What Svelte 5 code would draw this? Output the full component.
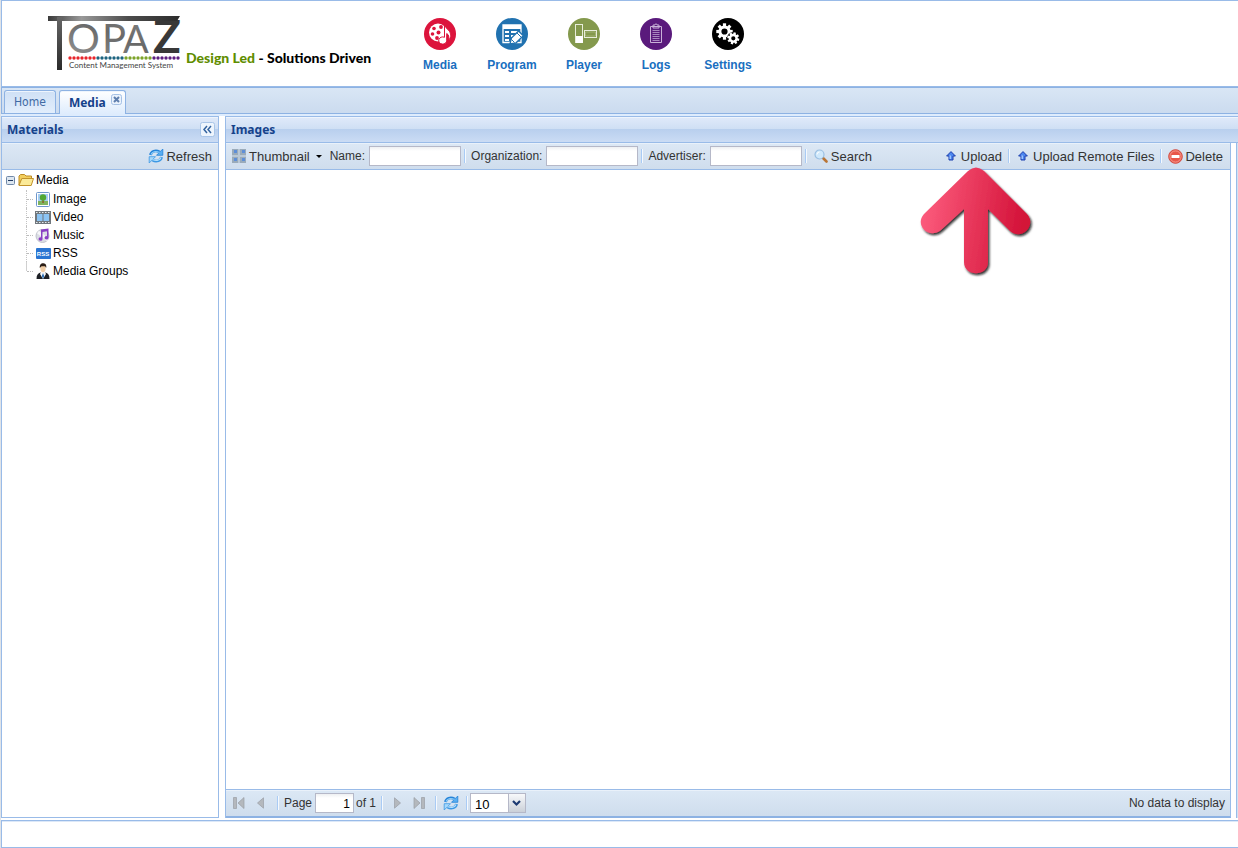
<script>
  let page = $state('1');
  let pageSize = $state('10');
  const nav = ['Media', 'Program', 'Player', 'Logs', 'Settings'];
  const materials = ['Image', 'Video', 'Music', 'RSS', 'Media Groups'];
  const dots = Array.from({ length: 28 }, (_, i) => i);
  const dotColor = (i) => (i < 7 ? '#e8252b' : i < 14 ? '#1d6480' : i < 21 ? '#7da32a' : '#5c1f80');
  const teeth = [0, 45, 90, 135, 180, 225, 270, 315];
</script>

{#snippet refreshIcon()}
  <svg width="16" height="16" viewBox="0 0 16 16" aria-hidden="true">
    <path d="M2.500 7C3 3.500 7.500 1.500 11.500 4" fill="none" stroke="#2583d8" stroke-width="2.800" />
    <path d="M14.800 1v6.300H8.500z" fill="#58aef2" stroke="#2583d8" stroke-width=".8" />
    <path d="M3 6.500C4 3.800 7.500 2.500 11.500 4.500" fill="none" stroke="#8fd0fa" stroke-width="1.200" />
    <path d="M13.500 9C13 12.500 8.500 14.500 4.500 12" fill="none" stroke="#3d98e4" stroke-width="2.800" />
    <path d="M1.200 15V8.700h6.300z" fill="#a5d8fb" stroke="#3d98e4" stroke-width=".8" />
    <path d="M13 9.500c-1 2.700-4.500 4-8.500 2" fill="none" stroke="#b5e0fc" stroke-width="1.200" />
  </svg>
{/snippet}

{#snippet uploadIcon()}
  <svg width="10" height="10" viewBox="0 0 10 10" aria-hidden="true">
    <path d="M5 .6 9.400 5H7v4H3V5H.6z" fill="#4c86ee" stroke="#1c3fae" stroke-width="1" stroke-linejoin="round" />
    <path d="M3.500 4.500H5V8H3.500z" fill="#9cc4ff" />
  </svg>
{/snippet}

{#snippet navIcon(name)}
  <svg width="32" height="32" viewBox="0 0 32 32" aria-hidden="true">
    {#if name === 'Media'}
      <circle cx="16" cy="16" r="16" fill="#dc143c" />
      <circle cx="14" cy="14.500" r="9" fill="#fff" />
      <g fill="#dc143c">
        <circle cx="14.500" cy="14.500" r="2" />
        <circle cx="10" cy="10.500" r="1.800" /><circle cx="17" cy="9" r="1.900" />
        <circle cx="8.500" cy="16" r="1.800" /><circle cx="13" cy="20" r="1.900" />
      </g>
      <path d="M20.500 7.500c1 3 6 4.500 6.300 9.500.1 2.500-1 4-2.300 5 .8-3 .2-5.500-1.800-6.500v6.800a4 3.600 0 1 1-2.200-3z" fill="#fff" stroke="#dc143c" stroke-width="1" />
    {:else if name === 'Program'}
      <circle cx="16" cy="16" r="16" fill="#2172b0" />
      <path d="M7 7h18v17.500H7z" fill="#2172b0" stroke="#fff" stroke-width="1.300" />
      <path d="M7 7h18v4H7z" fill="#fff" />
      <g fill="#fff"><path d="M9 13h4v2H9zM15 13h7v2h-7zM9 17h4v2H9zM15 17h5v2h-5zM9 21h4v2H9z" /></g>
      <path d="m14 26 1.400-6 7.200-7 4.700 4.800-7.200 7z" fill="#fff" stroke="#2172b0" stroke-width="1.300" />
      <path d="m15.500 21.500 3 3M21 15l4.200 4.200" stroke="#2172b0" fill="none" />
    {:else if name === 'Player'}
      <circle cx="16" cy="16" r="16" fill="#84994d" />
      <rect x="7.500" y="6.500" width="7" height="18" fill="none" stroke="#e8edda" />
      <rect x="8" y="18" width="7" height="7" fill="#fff" />
      <rect x="16.500" y="12.500" width="12" height="7" fill="none" stroke="#e8edda" />
      <path d="M17.500 14h10v4h-10z" fill="#84994d" stroke="#b5c38c" stroke-width=".6" />
    {:else if name === 'Logs'}
      <circle cx="16" cy="16" r="16" fill="#5a1a7c" />
      <path d="M10.500 8.500h11v16h-11zM13 8.500V7h2c0-1.600 2-1.600 2 0h2v3h-6z" fill="none" stroke="#c9b2d8" />
      <path d="M12.500 12.500h7M12.500 14.500h7M12.500 16.500h7M12.500 18.500h7M12.500 20.500h7M12.500 22.500h7" stroke="#a987bf" />
    {:else}
      <circle cx="16" cy="16" r="16" fill="#000" />
      <g transform="translate(12.500 13.500)" fill="#fff">
        {#each teeth as angle}
          <rect x="-1.600" y="-8.200" width="3.200" height="4" transform="rotate({angle})" />
        {/each}
        <circle r="4.600" fill="none" stroke="#fff" stroke-width="3" />
      </g>
      <g transform="translate(21.300 20.300)" fill="#fff">
        <circle r="6.300" fill="#000" />
        {#each teeth as angle}
          <rect x="-1.200" y="-6" width="2.400" height="3" transform="rotate({angle + 15})" />
        {/each}
        <circle r="3.300" fill="none" stroke="#fff" stroke-width="2.400" />
      </g>
    {/if}
  </svg>
{/snippet}

{#snippet treeIcon(name)}
  <svg width="16" height="16" viewBox="0 0 16 16" aria-hidden="true">
    {#if name === 'Image'}
      <rect x="1.500" y="1.500" width="13" height="14" rx="1" fill="#fff" stroke="#6c96cc" />
      <path d="M3 3h10v8H3z" fill="#a6cdf3" /><path d="M3 10h10v4H3z" fill="#7fb35e" />
      <path d="M7.300 8h1.500v4H7.300z" fill="#8b5a2b" /><circle cx="8" cy="6.500" r="3.200" fill="#52a832" />
    {:else if name === 'Video'}
      <path d="M0 2h16v13H0z" fill="#70777d" />
      <path d="M2 5h5.500v7H2zM8.500 5H14v7H8.500z" fill="#8cc4f3" />
      <path d="M1 3.500h15M1 13.500h15" stroke="#e6eaed" stroke-dasharray="1.500 1.500" />
    {:else if name === 'Music'}
      <circle cx="7.500" cy="9" r="6.500" fill="#dadde4" stroke="#c0c3cc" />
      <path d="M3 5l10 8" stroke="#f7f7fa" stroke-width="3" />
      <path d="M6 2.500 13.500 1.500v9.200a2 1.700 0 1 1-1.500-1.500V4.300l-4.500.6v7a2 1.700 0 1 1-1.500-1.500z" fill="#8a3fc4" />
    {:else if name === 'RSS'}
      <rect x="1" y="3" width="15" height="11" rx="1" fill="#2a75d2" />
      <text x="8" y="11" text-anchor="middle" class="rss">RSS</text>
    {:else}
      <path d="M1.500 16c0-4 1.500-6 4-6.500h5c2.500.5 4 2.500 4 6.500z" fill="#1d2025" />
      <path d="M6 9h4l1 2-3 5-3-5z" fill="#f6f8fb" /><path d="m8 10 1.200 3L8 16l-1.200-3z" fill="#2d6fb5" />
      <ellipse cx="8" cy="5.500" rx="2.600" ry="3.800" fill="#f0cda5" />
      <path d="M4.800 5C4.500 1 6.500 0 8.500.2c2.500.2 3.200 2 2.700 4.800L10 3.300H6.500z" fill="#2a1d15" />
    {/if}
  </svg>
{/snippet}

<div class="app">
  <header>
    <div class="brand">
      <svg class="logo" width="134" height="58" viewBox="0 0 134 58" role="img" aria-label="Topaz Content Management System">
        <defs>
          <linearGradient id="steel" gradientUnits="userSpaceOnUse" x1="0" y1="0" x2="134" y2="0">
            <stop offset="0" stop-color="#3a3a3a" /><stop offset=".25" stop-color="#999" />
            <stop offset=".6" stop-color="#4c4c4c" /><stop offset="1" stop-color="#2b2b2b" />
          </linearGradient>
          <linearGradient id="silver" x1="0" y1="1" x2="1" y2="0">
            <stop offset="0" stop-color="#a2a2a2" /><stop offset=".5" stop-color="#686868" /><stop offset="1" stop-color="#999" />
          </linearGradient>
          <linearGradient id="stem" x1="0" y1="0" x2="0" y2="1">
            <stop offset="0" stop-color="#666" /><stop offset="1" stop-color="#2b2b2b" />
          </linearGradient>
        </defs>
        <text class="wordmark">
          <tspan x="3" y="24" font-size="28" fill="#555">T</tspan><tspan x="19" y="39" font-size="41" fill="url(#silver)">O</tspan><tspan x="54" y="39" font-size="40" fill="url(#silver)">P</tspan><tspan x="75" y="39" font-size="38" fill="url(#silver)">A</tspan><tspan x="105" y="39" font-size="46" font-weight="700" fill="#383838">Z</tspan>
        </text>
        <path d="M0 2h132l-3 5H0z" fill="url(#steel)" />
        <rect x="9" y="3" width="5" height="53" fill="url(#stem)" />
        {#each dots as i}
          <circle cx={22 + i * 4} cy="44" r="1.700" fill={dotColor(i)} />
        {/each}
        <text x="21" y="54" class="subtitle">Content Management System</text>
      </svg>
      <p class="tagline"><span>Design Led</span> - Solutions Driven</p>
    </div>
    <nav>
      {#each nav as item}
        <a href={'#' + item.toLowerCase()}>{@render navIcon(item)}<span>{item}</span></a>
      {/each}
    </nav>
  </header>

  <div class="tabs" role="tablist">
    <button class="tab" role="tab" aria-selected="false">Home</button>
    <button class="tab active" role="tab" aria-selected="true">Media
      <svg width="11" height="11" viewBox="0 0 11 11" aria-hidden="true">
        <rect x=".5" y=".5" width="10" height="10" rx="2" fill="#eaf2fc" stroke="#a5c1e5" />
        <path d="m3 3 5 5M8 3 3 8" stroke="#5f7fae" stroke-width="2" />
      </svg>
    </button>
  </div>

  <div class="workspace">
    <aside>
      <div class="title">
        <h2>Materials</h2>
        <button class="collapse" aria-label="Collapse materials">
          <svg width="15" height="15" viewBox="0 0 15 15" aria-hidden="true">
            <rect x=".5" y=".5" width="14" height="14" rx="2" fill="#eef5fd" stroke="#a9c5e8" />
            <path d="M7 4l-3 3.500L7 11M11 4 8 7.500 11 11" fill="none" stroke="#33639f" stroke-width="1.500" />
          </svg>
        </button>
      </div>
      <div class="toolbar side"><button>{@render refreshIcon()}Refresh</button></div>
      <ul class="tree">
        <li class="root">
          <svg class="minus" width="9" height="9" viewBox="0 0 9 9" aria-hidden="true">
            <rect x=".5" y=".5" width="8" height="8" rx="1" fill="#dce6f0" stroke="#7088a8" /><path d="M2 4.500h5" stroke="#223a60" />
          </svg>
          <svg width="16" height="16" viewBox="0 0 16 16" aria-hidden="true">
            <path d="M1 13V4l1.500-1.500h4L8 4h5.500v3H4z" fill="#f2ce5d" stroke="#bd8c25" />
            <path d="M1 13.500 3.800 6.500h11.700l-2.300 7z" fill="#fbea98" stroke="#c2932c" />
          </svg>
          <span>Media</span>
        </li>
        {#each materials as item}
          <li class="leaf">{@render treeIcon(item)}<span>{item}</span></li>
        {/each}
      </ul>
    </aside>

    <main>
      <div class="title"><h2>Images</h2></div>
      <div class="content">
        <section>
          <div class="toolbar">
            <button class="thumb">
              <svg width="14" height="14" viewBox="0 0 14 14" aria-hidden="true">
                <path d="M0 0h14v14H0z" fill="#b9c8d6" />
                <path d="M0 0h6v6H0zM8 0h6v6H8zM0 8h6v6H0zM8 8h6v6H8z" fill="#9aabba" />
                <path d="M2 1h3v3H2zM10 1h3v3h-3zM2 9h3v3H2zM10 9h3v3h-3z" fill="#5e8fd8" />
              </svg>Thumbnail<i class="caret"></i>
            </button>
            <label class="first">Name:<input type="text" /></label><i class="sep"></i>
            <label>Organization:<input type="text" /></label><i class="sep"></i>
            <label>Advertiser:<input type="text" /></label><i class="sep"></i>
            <button class="search">
              <svg width="14" height="14" viewBox="0 0 14 14" aria-hidden="true">
                <path d="m8.500 8.500 4 4" stroke="#b97536" stroke-width="2.600" stroke-linecap="round" />
                <circle cx="5.500" cy="5.500" r="4.500" fill="#cfe8fb" stroke="#9abfe2" stroke-width="1.200" />
                <path d="M3 5.500A2.500 2.500 0 0 1 5.500 3" fill="none" stroke="#fff" />
              </svg>Search
            </button>
            <span class="push"></span>
            <span class="anchor">
              <button class="upload">{@render uploadIcon()}Upload</button>
              <svg class="pointer" width="118" height="114" viewBox="0 0 118 114" aria-hidden="true">
                <defs>
                  <linearGradient id="red" x1="0" y1="0" x2="1" y2=".15">
                    <stop offset="0" stop-color="#ff6182" /><stop offset="1" stop-color="#d31238" />
                  </linearGradient>
                  <filter id="shade" x="-10%" y="-10%" width="125%" height="125%">
                    <feDropShadow dx="1.500" dy="2" stdDeviation=".8" flood-color="#111" flood-opacity=".85" />
                  </filter>
                </defs>
                <path filter="url(#shade)" fill="url(#red)" d="M50 5q8-7 16 0l43 43c10 11-5 27-17 17L70 43v53c0 15-24 15-24 0V43L23 64C11 74-4 59 6 48z" />
              </svg>
            </span>
            <i class="sep"></i>
            <button class="upload">{@render uploadIcon()}Upload Remote Files</button>
            <i class="sep"></i>
            <button class="delete">
              <svg width="15" height="15" viewBox="0 0 15 15" aria-hidden="true">
                <circle cx="7.500" cy="7.500" r="6.800" fill="#e8574a" stroke="#d2483d" />
                <circle cx="7.500" cy="7.500" r="5.600" fill="none" stroke="#f7a79c" stroke-width=".8" />
                <rect x="3.500" y="6" width="8" height="3" rx=".5" fill="#fff" />
              </svg>Delete
            </button>
          </div>
          <div class="view"></div>
          <div class="toolbar pager">
            <button aria-label="First page"><svg width="12" height="12" viewBox="0 0 12 12"><path d="M.5.5h3v11h-3zM11 .5v11L5 6z" fill="#b4b8bd" stroke="#999ea5" stroke-width=".7" /></svg></button>
            <button aria-label="Previous page"><svg width="12" height="12" viewBox="0 0 12 12"><path d="M8.500.8v10.400L2.500 6z" fill="#b4b8bd" stroke="#999ea5" stroke-width=".7" /></svg></button>
            <i class="sep"></i>
            <label>Page<input class="page" type="text" bind:value={page} /></label><span class="of">of 1</span>
            <i class="sep"></i>
            <button class="next" aria-label="Next page"><svg width="12" height="12" viewBox="0 0 12 12"><path d="M3.500.8v10.400l6-5.200z" fill="#b4b8bd" stroke="#999ea5" stroke-width=".7" /></svg></button>
            <button aria-label="Last page"><svg width="12" height="12" viewBox="0 0 12 12"><path d="M8.500.5h3v11h-3zM1 .5v11L7 6z" fill="#b4b8bd" stroke="#999ea5" stroke-width=".7" /></svg></button>
            <i class="sep"></i>
            <button class="reload" aria-label="Reload">{@render refreshIcon()}</button>
            <i class="sep"></i>
            <div class="combo">
              <select aria-label="Rows per page" bind:value={pageSize}><option>10</option><option>20</option><option>50</option></select>
              <svg width="17" height="18" viewBox="0 0 17 18" aria-hidden="true">
                <defs><linearGradient id="trigger" x1="0" y1="0" x2="0" y2="1"><stop offset="0" stop-color="#f8f9fb" /><stop offset="1" stop-color="#cbd0d8" /></linearGradient></defs>
                <path d="M0 0h17v18H0z" fill="url(#trigger)" /><path d="M.5 0v18" stroke="#b5b8c8" />
                <path d="m5 7 3.500 3.500L12 7" fill="none" stroke="#1d3a72" stroke-width="2.200" />
              </svg>
            </div>
            <span class="push"></span>
            <span>No data to display</span>
          </div>
        </section>
        <div class="east"></div>
      </div>
    </main>
  </div>
  <footer></footer>
</div>

<style>
  :global(body) { margin: 0; background: #fff; }
  .app {
    box-sizing: border-box;
    display: flex;
    flex-direction: column;
    min-height: 100vh;
    border-left: 1px solid #dfe3e8;
    font-family: "Liberation Sans", Arial, sans-serif;
    font-size: 12px;
    color: #333;
  }
  button {
    display: flex;
    align-items: center;
    gap: 3px;
    margin: 0;
    padding: 0;
    border: 0;
    background: none;
    font: inherit;
    font-size: 13px;
    color: #333;
    white-space: nowrap;
  }
  svg { display: block; flex: none; }
  header {
    display: flex;
    box-sizing: border-box;
    height: 87px;
    border: 1px solid #99bbe8;
    border-width: 1px 0 1px 1px;
  }
  .brand { display: flex; align-items: flex-start; width: 356px; padding: 13px 0 0 46px; }
  .logo { overflow: visible; }
  .wordmark, .subtitle { font-family: Lato, sans-serif; }
  .subtitle { font-size: 8px; fill: #444; }
  .tagline {
    margin: 35px 0 0 4px;
    font: 900 14px/18px Lato, sans-serif;
    color: #000;
    white-space: nowrap;
  }
  .tagline span { color: #5f8d00; }
  nav { display: grid; grid-template-columns: repeat(5, 72px); padding-top: 17px; }
  nav a {
    display: flex;
    flex-direction: column;
    align-items: center;
    gap: 7px;
    height: 56px;
    font-weight: bold;
    line-height: 16px;
    color: #1a6fc0;
    text-decoration: none;
  }
  .tabs {
    display: flex;
    align-items: flex-end;
    gap: 3px;
    box-sizing: border-box;
    height: 27px;
    padding: 0 2px;
    border: 1px solid #8db2e3;
    border-width: 1px 0 1px 1px;
    background: linear-gradient(#d9e6f5, #cbdbef);
  }
  .tab {
    box-sizing: border-box;
    height: 23px;
    padding: 0 9px;
    border: 1px solid #8db2e3;
    border-bottom: 0;
    border-radius: 3px 3px 0 0;
    background: linear-gradient(#cfe0f5, #e2eefc);
    box-shadow: inset 0 1px #eef5fd;
    font: 12px "DejaVu Sans Condensed", "Open Sans", sans-serif;
    color: #416aa3;
  }
  .active {
    height: 24px;
    gap: 5px;
    padding: 0 3px 0 9px;
    margin-bottom: -1px;
    background: linear-gradient(#fff, #deecfd);
    font: bold 12px "Noto Sans", sans-serif;
    color: #15428b;
  }
  .active svg { margin-bottom: 7px; }
  .workspace { display: flex; flex: 1; gap: 6px; padding-top: 2px; background: linear-gradient(#deecfd 2px, #fff 2px); }
  aside {
    display: flex;
    flex-direction: column;
    box-sizing: border-box;
    width: 218px;
    border: 1px solid #99bbe8;
  }
  main { display: flex; flex: 1; flex-direction: column; min-width: 0; border: 1px solid #99bbe8; border-width: 1px 0 0 1px; }
  .title {
    display: flex;
    align-items: center;
    justify-content: space-between;
    box-sizing: border-box;
    height: 26px;
    padding: 0 3px 0 5px;
    border-bottom: 1px solid #99bbe8;
    background: linear-gradient(#e0eafa, #cfdff4 12px, #b8cfee 12px, #cbdcf4);
    box-shadow: inset 0 1px #eef4fc;
  }
  h2 { margin: 0; font: bold 12px/16px "Noto Sans", sans-serif; color: #15428b; }
  .toolbar {
    display: flex;
    align-items: center;
    box-sizing: border-box;
    height: 27px;
    padding: 0 7px 0 6px;
    border-bottom: 1px solid #99bbe8;
    background: linear-gradient(#dce8f5, #cfdded);
    box-shadow: inset 0 1px #e9f1fa;
    white-space: nowrap;
  }
  .side { justify-content: flex-end; padding-right: 6px; }
  .side button { gap: 2px; }
  .tree { margin: 0; padding: 0 0 0 4px; list-style: none; font-size: 12px; color: #000; }
  .tree li { display: flex; align-items: center; height: 18px; }
  .tree .root { height: 20px; }
  .minus { margin-right: 3px; }
  .root span { margin-left: 2px; }
  .tree .leaf { gap: 2px; margin-left: 20px; border-left: 1px dotted #c3c3c3; }
  .leaf:last-child { border-image: linear-gradient(#d0d0d0 50%, transparent 50%) 1; }
  .leaf::before { content: ""; width: 6px; border-top: 1px dotted #bbb; }
  .rss { font: bold 6px "Liberation Sans", sans-serif; fill: #fff; }
  .content { display: flex; flex: 1; }
  section { display: flex; flex: 1; flex-direction: column; min-width: 0; border-right: 1px solid #99bbe8; border-bottom: 2px solid #8db2e3; }
  .view { flex: 1; background: #fff; }
  .east { width: 1px; margin-left: 5px; border-left: 1px solid #99bbe8; background: #d3e1f1; }
  .caret { margin-left: 3px; border: 3px solid transparent; border-top-color: #000; border-bottom: 0; }
  label { display: flex; align-items: center; gap: 4px; margin-left: 5px; }
  .first { margin-left: 8px; }
  input {
    box-sizing: border-box;
    width: 92px;
    height: 20px;
    padding: 2px 3px 0;
    border: 1px solid #b5b8c8;
    background: linear-gradient(#eef0f2, #fff 4px);
    font: inherit;
    color: #000;
  }
  .sep { flex: none; width: 1px; height: 14px; margin-left: 3px; border-right: 1px solid #f5f9fd; background: #a9cbf5; }
  .search { margin-left: 7px; }
  .push { flex: 1; }
  .anchor { position: relative; }
  .upload { gap: 5px; margin: 0 3px 0 8px; }
  .delete { gap: 2px; margin-left: 6px; }
  .pointer { position: absolute; left: -20px; top: 17px; z-index: 2; pointer-events: none; }
  .pager { padding: 0 5px 0 7px; border-top: 1px solid #99bbe8; border-bottom: 0; }
  .pager button { margin-right: 10px; }
  .pager button + .sep { margin-left: 0; }
  .pager label { gap: 3px; }
  .pager .page { width: 39px; text-align: right; }
  .of { margin: 0 2px; }
  .pager .next { margin-left: 8px; }
  .pager .reload { margin: 0 7px 0 6px; }
  .combo {
    display: grid;
    grid-template-columns: 1fr 17px;
    box-sizing: border-box;
    width: 56px;
    height: 20px;
    margin-left: 2px;
    border: 1px solid #b5b8c8;
    background: #fff;
  }
  .combo select {
    grid-area: 1 / 1 / 2 / 3;
    appearance: none;
    padding: 2px 4px 0;
    border: 0;
    background: none;
    font: inherit;
    font-size: 13px;
    color: #000;
  }
  .combo svg { grid-area: 1 / 2; pointer-events: none; }
  footer { box-sizing: border-box; height: 28px; margin-top: 2px; border: 1px solid #99bbe8; border-right: 0; box-shadow: inset 0 1px #dce8f8; }
</style>
